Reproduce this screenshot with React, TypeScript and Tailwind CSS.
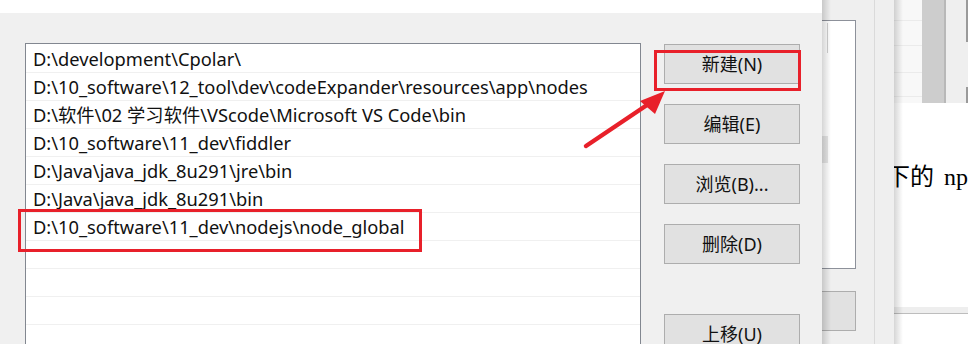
import React from "react";

const rows = [
  "D:\\development\\Cpolar\\",
  "D:\\10_software\\12_tool\\dev\\codeExpander\\resources\\app\\nodes",
  "D:\\软件\\02 学习软件\\VScode\\Microsoft VS Code\\bin",
  "D:\\10_software\\11_dev\\fiddler",
  "D:\\Java\\java_jdk_8u291\\jre\\bin",
  "D:\\Java\\java_jdk_8u291\\bin",
  "D:\\10_software\\11_dev\\nodejs\\node_global",
  "",
  "",
  "",
  "",
  "",
];

const ui = { fontFamily: '"Noto Sans", "Noto Sans CJK SC", sans-serif' };

function Btn({ label, className = "" }: { label: string; className?: string }) {
  return (
    <div
      className={`h-[40px] w-[136px] shrink-0 border border-[#adadad] bg-[#e1e1e1] flex items-center justify-center text-[18px] text-[#111] ${className}`}
      style={ui}
    >
      {label}
    </div>
  );
}

export default function App() {
  return (
    <div className="relative w-[968px] h-[344px] overflow-hidden flex bg-white">
      {/* Main dialog */}
      <div className="w-[822px] h-full shrink-0 flex flex-col overflow-hidden">
        <div className="h-[13px] shrink-0 bg-white" />
        <div className="flex-1 min-h-0 overflow-hidden bg-[#f0f0f0] flex items-start pl-[25px]">
          <div className="mt-[30px] w-[616px] h-[320px] shrink-0 border border-[#828790] bg-white pt-px">
            {rows.map((r, i) => (
              <div
                key={i}
                className="h-[28px] border-b border-[#f0f0f0] pl-[7px] pt-px flex items-center text-[18.3px] text-[#111] whitespace-nowrap leading-none"
                style={ui}
              >
                {r}
              </div>
            ))}
          </div>
          <div className="ml-[23px] mt-[31px] flex flex-col shrink-0">
            <Btn label="新建(N)" />
            <Btn label="编辑(E)" className="mt-[20px]" />
            <Btn label="浏览(B)..." className="mt-[20px]" />
            <Btn label="删除(D)" className="mt-[20px]" />
            <Btn label="上移(U)" className="mt-[50px]" />
          </div>
        </div>
      </div>

      {/* Second window (partially hidden) */}
      <div className="relative w-[72px] h-full shrink-0 bg-[#efefef] flex overflow-hidden">
        <div className="w-[52px] shrink-0 flex flex-col pt-[20px]">
          <div className="relative w-[34px] h-[249px] shrink-0 border-t border-r border-b border-[#8d919a] bg-white">
            <div className="absolute left-[5px] top-[2px] w-px h-[30px] bg-[#d0d0d0]" />
            <div className="absolute left-0 top-[115px] w-[6px] h-[27px] bg-[#e6e6e6]" />
          </div>
          <div className="mt-[22px] w-[34px] h-[40px] shrink-0 border-t border-r border-b border-[#adadad] bg-[#e1e1e1]" />
        </div>
        <div className="w-px h-full shrink-0 bg-[#dadada]" />
        <div className="flex-1" />
        <div className="absolute left-0 top-0 w-[9px] h-full bg-gradient-to-r from-[rgba(0,0,0,0.16)] to-transparent" />
      </div>

      {/* Third window */}
      <div className="relative w-[74px] shrink-0 h-full flex flex-col bg-white overflow-hidden">
        <div className="h-[103px] shrink-0 flex">
          <div className="w-[28px] h-full bg-[#f8f8f8] flex flex-col">
            <div className="h-[20px]" />
            <div className="h-px bg-[#ebebeb]" />
            <div className="h-[24px]" />
            <div className="h-px bg-[#ebebeb]" />
            <div className="h-[26px]" />
            <div className="h-px bg-[#ebebeb]" />
            <div className="h-[23px]" />
            <div className="h-px bg-[#ebebeb]" />
          </div>
          <div className="w-[22px] h-full bg-[#cdcdcd]" />
          <div className="w-[2px] h-full bg-[#b8b8b8]" />
          <div className="flex-1 h-full bg-[#efefef] flex justify-end">
            <div className="w-[2px] flex flex-col">
              <div className="h-[42px] bg-[#9a9a9a]" />
              <div className="h-[45px]" />
              <div className="h-[16px] bg-[#9a9a9a]" />
            </div>
          </div>
        </div>
        <div className="h-[204px] shrink-0 overflow-hidden">
          <div
            className="mt-[62px] ml-[-8px] whitespace-nowrap text-[24px] leading-[24px] text-black"
            style={{ fontFamily: '"Liberation Serif", "Noto Sans CJK SC", serif' }}
          >
            下的<span className="ml-[10px]">np</span>
          </div>
        </div>
        <div className="h-[6px] shrink-0 bg-[#eeeeee]" />
        <div className="h-px shrink-0 bg-[#bdbdbd]" />
        <div className="flex-1 bg-white" />
        <div className="absolute left-0 top-0 w-[9px] h-full bg-gradient-to-r from-[rgba(0,0,0,0.16)] to-transparent" />
      </div>

      {/* Annotations */}
      <div className="absolute left-[18px] top-[209px] w-[404px] h-[43px] border-[3px] border-[#e8202a]" />
      <div className="absolute left-[654px] top-[50px] w-[147px] h-[41px] border-[3px] border-[#e8202a]" />
      <svg className="absolute left-0 top-0 pointer-events-none" width="968" height="344">
        <line x1="586" y1="146" x2="650" y2="103" stroke="#e8202a" strokeWidth="4.5" strokeLinecap="round" />
        <polygon points="665,91 640,101 655,114" fill="#e8202a" />
      </svg>
    </div>
  );
}
